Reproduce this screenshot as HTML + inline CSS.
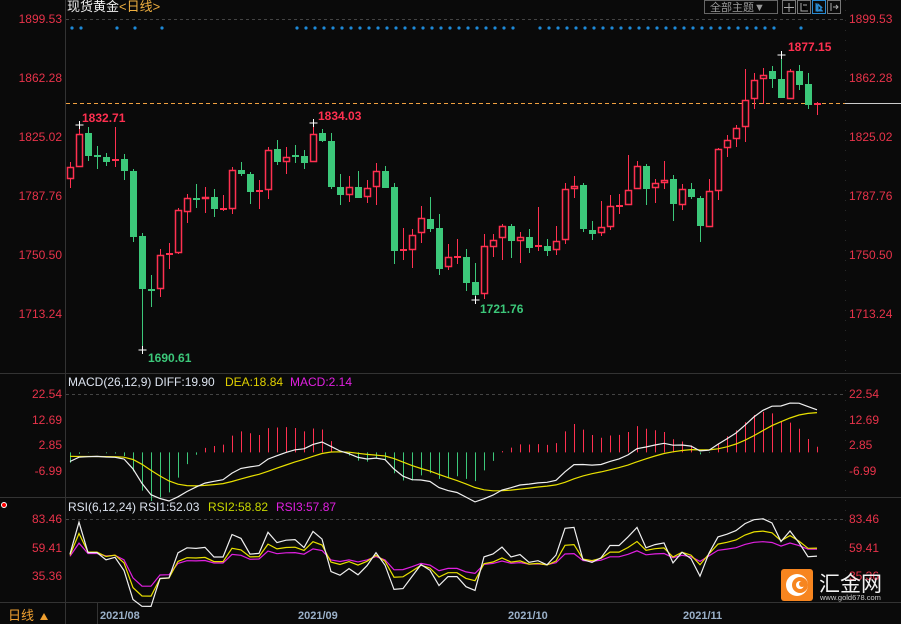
<!DOCTYPE html>
<html><head><meta charset="utf-8">
<style>
html,body{margin:0;padding:0;background:#0a0a0a;width:901px;height:624px;overflow:hidden;font-family:"Liberation Sans","Noto Sans CJK SC",sans-serif}
svg{position:absolute;left:0;top:0}
</style></head><body>
<svg id="s" width="901" height="624" xmlns="http://www.w3.org/2000/svg" font-family="Liberation Sans, Noto Sans CJK SC, sans-serif">
<rect width="901" height="624" fill="#0a0a0a"/>
<line x1="65.5" y1="0" x2="65.5" y2="624" stroke="#333" />
<line x1="845.5" y1="0" x2="845.5" y2="600" stroke="#2a2a2a" stroke-dasharray="1,9"/>
<line x1="0" y1="373.5" x2="901" y2="373.5" stroke="#333"/>
<line x1="0" y1="497.5" x2="901" y2="497.5" stroke="#333"/>
<line x1="0" y1="602.5" x2="901" y2="602.5" stroke="#333"/>
<line x1="97.5" y1="603" x2="97.5" y2="624" stroke="#333"/>
<line x1="66" y1="19.5" x2="845" y2="19.5" stroke="#444" stroke-dasharray="3,3"/>
<line x1="66" y1="394.5" x2="845" y2="394.5" stroke="#444" stroke-dasharray="3,3"/>
<line x1="66" y1="519.5" x2="845" y2="519.5" stroke="#444" stroke-dasharray="3,3"/>
<line x1="66" y1="103.5" x2="845" y2="103.5" stroke="#f0a040" stroke-dasharray="4,3"/>
<line x1="845" y1="103.5" x2="901" y2="103.5" stroke="#ccc"/>
<text x="67" y="11" font-size="13" fill="#f0f0f0">现货黄金</text>
<text x="119" y="11" font-size="13" fill="#f0b040">&lt;日线&gt;</text>
<rect x="704.5" y="0.5" width="73" height="13" fill="none" stroke="#666"/>
<text x="710" y="11" font-size="11" fill="#999">全部主题▼</text>
<rect x="782.5" y="0.5" width="13" height="13" fill="none" stroke="#777"/>
<path d="M789 3v9M784 7.5h10" stroke="#aaa"/>
<rect x="797.5" y="0.5" width="13" height="13" fill="none" stroke="#777"/>
<path d="M801 3v8h7M803 5h4" stroke="#aaa"/>
<rect x="812.5" y="0.5" width="13" height="13" fill="none" stroke="#2a8ad0"/>
<path d="M816 3v8h7M818 4l4 3.5-4 3.5z" stroke="#2a8ad0" fill="#2a8ad0"/>
<rect x="827.5" y="0.5" width="13" height="13" fill="none" stroke="#777"/>
<path d="M831 3v8M833 7h5M836 5l2 2-2 2" stroke="#aaa" fill="none"/>
<g id="g"></g>
<g font-size="12" fill="#e8334a">
<text x="62" y="23" text-anchor="end">1899.53</text>
<text x="62" y="82" text-anchor="end">1862.28</text>
<text x="62" y="141" text-anchor="end">1825.02</text>
<text x="62" y="200" text-anchor="end">1787.76</text>
<text x="62" y="259" text-anchor="end">1750.50</text>
<text x="62" y="318" text-anchor="end">1713.24</text>
<text x="849" y="23">1899.53</text>
<text x="849" y="82">1862.28</text>
<text x="849" y="141">1825.02</text>
<text x="849" y="200">1787.76</text>
<text x="849" y="259">1750.50</text>
<text x="849" y="318">1713.24</text>
<text x="62" y="398" text-anchor="end">22.54</text>
<text x="62" y="424" text-anchor="end">12.69</text>
<text x="62" y="449" text-anchor="end">2.85</text>
<text x="62" y="475" text-anchor="end">-6.99</text>
<text x="849" y="398">22.54</text>
<text x="849" y="424">12.69</text>
<text x="849" y="449">2.85</text>
<text x="849" y="475">-6.99</text>
<text x="62" y="523" text-anchor="end">83.46</text>
<text x="62" y="552" text-anchor="end">59.41</text>
<text x="62" y="580" text-anchor="end">35.36</text>
<text x="849" y="523">83.46</text>
<text x="849" y="552">59.41</text>
<text x="849" y="580">35.36</text>
</g>
<g font-size="12" font-weight="bold">
<text x="82" y="122" fill="#ff3050">1832.71</text>
<text x="318" y="120" fill="#ff3050">1834.03</text>
<text x="788" y="51" fill="#ff3050">1877.15</text>
<text x="148" y="362" fill="#3cc87a">1690.61</text>
<text x="480" y="313" fill="#3cc87a">1721.76</text>
</g>
<g font-size="12">
<text x="68" y="386" fill="#dde4f0">MACD(26,12,9) DIFF:19.90</text>
<text x="225" y="386" fill="#e0d000">DEA:18.84</text>
<text x="290" y="386" fill="#e020e0">MACD:2.14</text>
<text x="68" y="511" fill="#dde4f0">RSI(6,12,24) RSI1:52.03</text>
<text x="208" y="511" fill="#c8d800">RSI2:58.82</text>
<text x="276" y="511" fill="#e020e0">RSI3:57.87</text>
</g>
<circle cx="4" cy="505" r="2.5" fill="#f00" stroke="#fff" stroke-width="1"/>
<text x="8" y="620" font-size="13" fill="#f0a030">日线</text>
<path d="M40 620l4-7 4 7z" fill="#f0a030"/>
<g font-size="11" font-weight="bold" fill="#9ab0c8">
<text x="100" y="619">2021/08</text>
<text x="298" y="619">2021/09</text>
<text x="508" y="619">2021/10</text>
<text x="683" y="619">2021/11</text>
</g>
<rect x="781" y="569" width="32" height="32" rx="3" fill="#f7851f"/>
<circle cx="797" cy="585" r="11" fill="#fff"/>
<circle cx="800" cy="585" r="8" fill="#f7851f"/>
<circle cx="800" cy="585" r="4" fill="#fff"/>
<circle cx="802" cy="584" r="3" fill="#f7851f"/>
<text x="819" y="591" font-size="21" fill="#f2f2f2">汇金网</text>
<text x="820" y="600" font-size="7.5" fill="#ccc">www.gold678.com</text>
</svg>
<script>
var D=[[167,179,162,188,'r'],[134,167,125,167,'r'],[133,156,127,161,'g'],[156,156,146,169,'g'],[157,162,153,166,'g'],[160,160,127,167,'r'],[159,171,154,180,'g'],[171,237,169,242,'g'],[236,289,233,350,'g'],[290,290,275,307,'g'],
[255,289,249,297,'r'],[254,254,243,269,'r'],[210,253,208,254,'r'],[198,212,194,223,'r'],[199,199,184,208,'g'],[197,199,187,213,'r'],[197,209,189,217,'g'],[209,209,195,211,'r'],[170,209,167,214,'r'],[170,174,162,176,'g'],
[174,192,172,204,'g'],[191,191,180,209,'r'],[150,190,147,199,'r'],[149,162,140,165,'g'],[157,162,147,174,'r'],[156,156,145,163,'g'],[156,163,150,169,'g'],[134,162,123,162,'r'],[133,141,129,142,'g'],[141,187,133,189,'g'],
[187,195,174,205,'g'],[187,195,176,202,'r'],[187,198,171,198,'g'],[188,197,180,203,'r'],[171,187,163,205,'r'],[171,188,166,188,'g'],[187,251,183,264,'g'],[250,250,228,260,'r'],[235,250,229,268,'r'],[218,233,206,243,'r'],
[219,229,197,232,'g'],[228,269,214,275,'g'],[257,267,244,270,'r'],[257,257,239,264,'r'],[257,283,249,291,'g'],[282,295,263,300,'g'],[246,294,234,299,'r'],[240,247,234,257,'r'],[226,238,224,260,'r'],[226,241,224,258,'g'],
[237,241,232,263,'r'],[237,248,229,253,'g'],[246,246,207,251,'r'],[246,251,239,256,'g'],[241,250,226,255,'r'],[189,240,183,244,'r'],[186,189,176,198,'r'],[185,229,183,232,'g'],[230,234,221,240,'g'],[227,233,201,236,'r'],
[206,227,195,230,'r'],[206,206,194,214,'r'],[190,205,155,205,'r'],[166,189,161,189,'r'],[166,189,164,205,'g'],[183,188,179,203,'r'],[180,183,161,189,'r'],[179,204,175,221,'g'],[189,205,184,210,'r'],[189,197,183,199,'g'],
[198,226,196,242,'g'],[191,227,179,227,'r'],[149,191,148,200,'r'],[140,148,135,157,'r'],[128,139,125,147,'r'],[100,127,69,142,'r'],[80,99,73,109,'r'],[75,79,68,104,'r'],[71,79,66,88,'g'],[79,98,55,98,'g'],
[71,99,69,99,'r'],[71,85,65,90,'g'],[84,105,73,109,'g'],[104,104,102,115,'r']];
var R='#ff3050',G='#3cc87a',h='';
function X(i){return 70+9*i;}
var dots=[0,1,5,7,10];for(var i=25;i<=49;i++)dots.push(i);for(i=52;i<=78;i++)dots.push(i);dots.push(81);
dots.forEach(function(i){h+='<circle cx="'+(X(i)+2)+'" cy="28" r="1.6" fill="#1e8ad8"/>';});
D.forEach(function(d,i){var x=X(i),c=d[4]=='r'?R:G;
h+='<line x1="'+(x+.5)+'" y1="'+d[2]+'" x2="'+(x+.5)+'" y2="'+d[3]+'" stroke="'+c+'"/>';
var bh=d[1]-d[0];
if(bh<2){h+='<rect x="'+(x-3)+'" y="'+(d[0]-1)+'" width="7" height="2" fill="'+c+'"/>';}
else if(d[4]=='r'){h+='<rect x="'+(x-2.5)+'" y="'+(d[0]+.5)+'" width="6" height="'+(bh-1)+'" fill="#0a0a0a" stroke="'+c+'" stroke-width="1.5"/>';}
else{h+='<rect x="'+(x-3)+'" y="'+d[0]+'" width="7" height="'+bh+'" fill="'+c+'"/>';}
});
[[1,125],[27,123],[79,55],[8,350],[45,300]].forEach(function(p){var x=X(p[0])+.5;h+='<path d="M'+(x-4)+' '+p[1]+'h8M'+x+' '+(p[1]-4)+'v8" stroke="#fff"/>';});
var cl=D.map(function(d){var y=d[4]=='r'?d[0]:d[1];return 1899.53-(y-18)/1.5835;});
var e12=cl[0],e26=cl[0],dea=0,dif=[],de=[],mc=[];
cl.forEach(function(c,i){e12=e12*11/13+c*2/13;e26=e26*25/27+c*2/27;var df=e12-e26-3.5;if(i==0)dea=-1;dea=dea*0.8+df*0.2;dif.push(df);de.push(dea);mc.push(2*(df-dea));});
function my(v){return 452.4-v*2.59;}
mc.forEach(function(v,i){var x=X(i)+.5;h+='<line x1="'+x+'" y1="'+my(0)+'" x2="'+x+'" y2="'+my(v)+'" stroke="'+(v>=0?R:G)+'"/>';});
function pl(a,f,c){return '<polyline fill="none" stroke="'+c+'" stroke-width="1.2" points="'+a.map(function(v,i){return X(i)+','+f(v).toFixed(1);}).join(' ')+'"/>';}
h+=pl(de,my,'#e8e000')+pl(dif,my,'#f0f0f0');
function rsi(n,r0){var u=3*r0/100,d=3*(1-r0/100),out=[r0];for(var i=1;i<cl.length;i++){var df=cl[i]-cl[i-1];var up=Math.max(df,0),dn=Math.max(-df,0);u=(up+(n-1)*u)/n;d=(dn+(n-1)*d)/n;out.push(100*u/(u+d));}return out;}
function ry(v){return 519+(83.46-v)*1.185;}
h+=pl(rsi(24,52),ry,'#e020e0')+pl(rsi(12,53),ry,'#e8e000')+pl(rsi(6,54),ry,'#f0f0f0');
document.getElementById('g').innerHTML=h;
</script>
</body></html>
